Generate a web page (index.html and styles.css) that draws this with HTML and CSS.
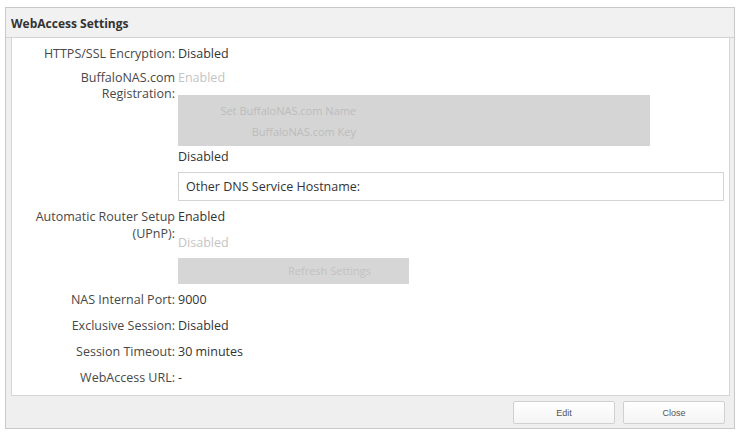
FILE: index.html
```html
<!DOCTYPE html>
<html>
<head>
    <title>WebAccess Settings</title>
    <link rel="stylesheet" href="styles.css">
</head>
<body>
    <div class="dialog">
        <div class="dialog-title">WebAccess Settings</div>

        <div class="dialog-body">
            <!-- HTTPS -->
            <div class="row">
                <div class="label">HTTPS/SSL Encryption:</div>
                <div class="value">Disabled</div>
            </div>

            <!-- BuffaloNAS.com -->
            <div class="row">
                <div class="label">BuffaloNAS.com<br>Registration:</div>
                <div class="value">
                    <div class="muted">Enabled</div>
                    <div class="grey-box">
                        <div class="grey-line">Set BuffaloNAS.com Name</div>
                        <div class="grey-line">BuffaloNAS.com Key</div>
                    </div>
                    <div class="sub">Disabled</div>
                    <div class="text-box">Other DNS Service Hostname:</div>
                </div>
            </div>

            <!-- UPnP -->
            <div class="row row-upnp">
                <div class="label">Automatic Router Setup<br><span class="label-2">(UPnP):</span></div>
                <div class="value">
                    <div>Enabled</div>
                    <div class="muted muted-low">Disabled</div>
                    <div class="grey-button">Refresh Settings</div>
                </div>
            </div>

            <div class="row row-plain">
                <div class="label">NAS Internal Port:</div>
                <div class="value">9000</div>
            </div>
            <div class="row row-plain">
                <div class="label">Exclusive Session:</div>
                <div class="value">Disabled</div>
            </div>
            <div class="row row-plain">
                <div class="label">Session Timeout:</div>
                <div class="value">30 minutes</div>
            </div>
            <div class="row row-plain">
                <div class="label">WebAccess URL:</div>
                <div class="value">-</div>
            </div>
        </div>

        <div class="dialog-footer">
            <button class="btn btn-edit">Edit</button>
            <button class="btn btn-close">Close</button>
        </div>
    </div>
</body>
</html>
```

FILE: styles.css
```css
body {
    margin: 0;
    padding: 7px 2px 0 5px;
    background: #ffffff;
    font-family: "Open Sans", "Liberation Sans", sans-serif;
    font-size: 12.5px;
    color: #3a3a3a;
}

.dialog {
    width: 728px;
    height: 420px;
    border: 1px solid #c9c9c9;
    background: #efefef;
    display: flex;
    flex-direction: column;
}

.dialog-title {
    height: 29px;
    line-height: 32px;
    padding-left: 5px;
    font-size: 12px;
    font-weight: bold;
    color: #333;
    border-bottom: 1px solid #d2d2d2;
    background: #f1f1f1;
}

.dialog-body {
    margin: 0 4px 0 5px;
    height: 349px;
    padding-top: 8px;
    background: #ffffff;
    border: 1px solid #d6d6d6;
    border-top: none;
}

.row {
    display: flex;
    line-height: 16px;
    margin-bottom: 8px;
}

.row-plain {
    margin-bottom: 10px;
}

.label {
    width: 163px;
    padding-right: 3px;
    text-align: right;
    color: #484848;
}

.label-2 {
    display: inline-block;
    margin-top: 1px;
}

.value {
    flex: 1;
    color: #333;
}

.muted {
    color: #c4c4c4;
}

.muted-low {
    margin-top: 10px;
}

.grey-box {
    width: 472px;
    height: 51px;
    margin-top: 9px;
    background: #d5d5d5;
    padding-top: 5px;
    box-sizing: border-box;
}

.grey-line {
    width: 178px;
    height: 21px;
    line-height: 21px;
    text-align: right;
    color: #bcbcbc;
    font-size: 11px;
}

.sub {
    margin-top: 3px;
}

.text-box {
    width: 546px;
    height: 29px;
    margin-top: 7px;
    box-sizing: border-box;
    border: 1px solid #d4d4d4;
    line-height: 27px;
    padding-left: 7px;
    color: #333;
}

.grey-button {
    width: 231px;
    height: 26px;
    margin-top: 7px;
    background: #d6d6d6;
    line-height: 26px;
    padding-left: 110px;
    box-sizing: border-box;
    color: #c2c2c2;
    font-size: 11px;
}

.dialog-footer {
    flex: 1;
    display: flex;
    justify-content: flex-end;
    align-items: flex-start;
    gap: 8px;
    padding: 5px 9px 0 0;
}

.btn {
    height: 23px;
    border: 1px solid #d0d0d0;
    border-radius: 2px;
    background: linear-gradient(#ffffff, #f4f4f4);
    font-family: "Liberation Sans", sans-serif;
    font-size: 9px;
    color: #555;
    padding: 0;
}

.btn-edit {
    width: 102px;
}

.btn-close {
    width: 102px;
}
```
